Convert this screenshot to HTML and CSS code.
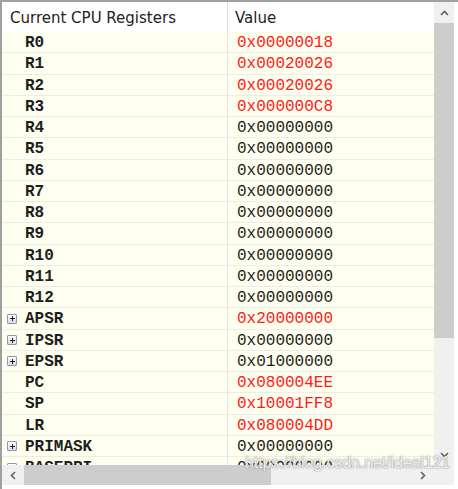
FILE: index.html
```html
<!DOCTYPE html>
<html>
<head>
<meta charset="utf-8">
<link rel="stylesheet" href="styles.css">
</head>
<body>
<div class="window">
  <div class="grid-area">
    <div class="header">
      <div class="hcell hname">Current CPU Registers</div>
      <div class="hcell hval">Value</div>
    </div>
    <div class="rows">
      <div class="row"><div class="name"><span class="slot"></span>R0</div><div class="val red">0x00000018</div></div>
      <div class="row"><div class="name"><span class="slot"></span>R1</div><div class="val red">0x00020026</div></div>
      <div class="row"><div class="name"><span class="slot"></span>R2</div><div class="val red">0x00020026</div></div>
      <div class="row"><div class="name"><span class="slot"></span>R3</div><div class="val red">0x000000C8</div></div>
      <div class="row"><div class="name"><span class="slot"></span>R4</div><div class="val">0x00000000</div></div>
      <div class="row"><div class="name"><span class="slot"></span>R5</div><div class="val">0x00000000</div></div>
      <div class="row"><div class="name"><span class="slot"></span>R6</div><div class="val">0x00000000</div></div>
      <div class="row"><div class="name"><span class="slot"></span>R7</div><div class="val">0x00000000</div></div>
      <div class="row"><div class="name"><span class="slot"></span>R8</div><div class="val">0x00000000</div></div>
      <div class="row"><div class="name"><span class="slot"></span>R9</div><div class="val">0x00000000</div></div>
      <div class="row"><div class="name"><span class="slot"></span>R10</div><div class="val">0x00000000</div></div>
      <div class="row"><div class="name"><span class="slot"></span>R11</div><div class="val">0x00000000</div></div>
      <div class="row"><div class="name"><span class="slot"></span>R12</div><div class="val">0x00000000</div></div>
      <div class="row"><div class="name"><span class="slot"><span class="plus"></span></span>APSR</div><div class="val red">0x20000000</div></div>
      <div class="row"><div class="name"><span class="slot"><span class="plus"></span></span>IPSR</div><div class="val">0x00000000</div></div>
      <div class="row"><div class="name"><span class="slot"><span class="plus"></span></span>EPSR</div><div class="val">0x01000000</div></div>
      <div class="row"><div class="name"><span class="slot"></span>PC</div><div class="val red">0x080004EE</div></div>
      <div class="row"><div class="name"><span class="slot"></span>SP</div><div class="val red">0x10001FF8</div></div>
      <div class="row"><div class="name"><span class="slot"></span>LR</div><div class="val red">0x080004DD</div></div>
      <div class="row"><div class="name"><span class="slot"><span class="plus"></span></span>PRIMASK</div><div class="val">0x00000000</div></div>
      <div class="row"><div class="name"><span class="slot"><span class="plus"></span></span>BASEPRI</div><div class="val">0x00000000</div></div>
    </div>
  </div>
  <div class="vscroll">
    <div class="sbtn"><svg width="9" height="6" viewBox="0 0 9 6"><path d="M1 5 L4.5 1.5 L8 5" fill="none" stroke="#606060" stroke-width="1.6"/></svg></div>
    <div class="vthumb"></div>
    <div class="vtrack"></div>
    <div class="sbtn"><svg width="9" height="6" viewBox="0 0 9 6"><path d="M1 1 L4.5 4.5 L8 1" fill="none" stroke="#606060" stroke-width="1.6"/></svg></div>
  </div>
  <div class="hscroll">
    <div class="hbtn"><svg width="6" height="9" viewBox="0 0 6 9"><path d="M5 1 L1.5 4.5 L5 8" fill="none" stroke="#606060" stroke-width="1.6"/></svg></div>
    <div class="hthumb"></div>
    <div class="htrack"></div>
    <div class="hbtn"><svg width="6" height="9" viewBox="0 0 6 9"><path d="M1 1 L4.5 4.5 L1 8" fill="none" stroke="#606060" stroke-width="1.6"/></svg></div>
  </div>
  <div class="corner"></div>
  <div class="watermark">https://blog.csdn.net/ideal121</div>
</div>
</body>
</html>
```

FILE: styles.css
```css
html, body {
  margin: 0;
  padding: 0;
  background: #ffffff;
}

.window {
  position: relative;
  width: 458px;
  height: 489px;
  box-sizing: border-box;
  border-top: 2px solid #a0a0a0;
  border-left: 2px solid #a0a0a0;
  padding-right: 4px;
  padding-bottom: 4px;
  display: grid;
  grid-template-columns: 432px 20px;
  grid-template-rows: 463px 20px;
  overflow: hidden;
  background: #ffffff;
}

.grid-area {
  overflow: hidden;
  display: flex;
  flex-direction: column;
  background: #fffff0;
}

.header {
  display: flex;
  height: 30px;
  flex: none;
  background: #ffffff;
  font-family: "DejaVu Sans", sans-serif;
  font-size: 15px;
  color: #222222;
}

.hcell {
  display: flex;
  align-items: center;
  padding-top: 2px;
  box-sizing: border-box;
}

.hname {
  width: 226px;
  padding-left: 8px;
  border-right: 1px solid #e0e0e0;
}

.hval {
  padding-left: 7px;
}

.rows {
  display: flex;
  flex-direction: column;
}

.row {
  display: flex;
  height: 21.25px;
  flex: none;
  box-sizing: border-box;
  border-bottom: 1px solid #ececec;
  font-family: "Liberation Mono", monospace;
  font-size: 16px;
  color: #1e1e1e;
}

.name {
  width: 220px;
  padding-left: 5px;
  padding-top: 2px;
  box-sizing: content-box;
  border-right: 1px solid #e4e4e4;
  display: flex;
  align-items: center;
  font-weight: bold;
}

.slot {
  width: 18px;
  display: flex;
  align-items: center;
}

.plus {
  position: relative;
  width: 8px;
  height: 8px;
  margin-top: -1px;
  border: 1px solid #8c9aaa;
  border-radius: 1px;
  background: linear-gradient(#ffffff, #d4dae2);
}

.plus::before {
  content: "";
  position: absolute;
  left: 1.5px;
  top: 3.5px;
  width: 5px;
  height: 1px;
  background: #202020;
}

.plus::after {
  content: "";
  position: absolute;
  left: 3.5px;
  top: 1.5px;
  width: 1px;
  height: 5px;
  background: #202020;
}

.val {
  padding-left: 9px;
  padding-top: 2px;
  display: flex;
  align-items: center;
}

.red {
  color: #ff1a1a;
}

.vscroll {
  display: flex;
  flex-direction: column;
  background: #f0f0f0;
  padding-top: 1px;
}

.sbtn {
  height: 20px;
  flex: none;
  display: flex;
  align-items: center;
  justify-content: center;
}

.vthumb {
  height: 315px;
  flex: none;
  background: #cdcdcd;
}

.vtrack {
  flex: 1;
}

.hscroll {
  display: flex;
  background: #f0f0f0;
}

.hbtn {
  width: 22px;
  flex: none;
  display: flex;
  align-items: center;
  justify-content: center;
}

.hthumb {
  width: 247px;
  flex: none;
  background: #cdcdcd;
}

.htrack {
  flex: 1;
}

.corner {
  background: #f0f0f0;
}

.watermark {
  position: absolute;
  left: 243px;
  top: 452px;
  font-family: "Liberation Sans", sans-serif;
  font-size: 16px;
  letter-spacing: -0.1px;
  color: rgba(255, 255, 255, 0.9);
  text-shadow: 0 0 1px rgba(110, 110, 110, 0.9), 0 0 2px rgba(110, 110, 110, 0.5);
  white-space: nowrap;
}
```
